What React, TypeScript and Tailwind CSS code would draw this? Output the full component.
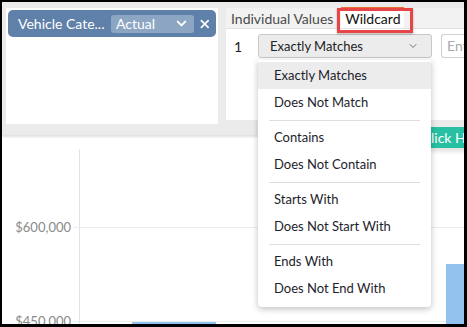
import { ChevronDown, X } from "lucide-react"

const groups = [
  ["Exactly Matches", "Does Not Match"],
  ["Contains", "Does Not Contain"],
  ["Starts With", "Does Not Start With"],
  ["Ends With", "Does Not End With"],
]

export default function App() {
  return (
    <div
      className="relative w-[467px] h-[327px] overflow-hidden border-black border-l-2 border-t-2 border-r-[3px] border-b-[3px] bg-white text-[14px]"
      style={{ fontFamily: "Lato, 'Open Sans', sans-serif" }}
    >
      {/* Filter strip */}
      <div className="flex h-[133px] gap-2 bg-[#ebebeb] px-[4px] pt-[6px] shadow-[0_2px_2px_rgba(0,0,0,0.12)]">
        {/* Left card */}
        <div className="h-[116px] w-[212px] shrink-0 bg-white p-[2px]">
          <div className="flex h-[27px] items-center rounded-[5px] bg-[#5f80a8] pl-[10px] pr-[4px] text-white">
            <span className="w-[93px] shrink-0 leading-none">Vehicle Cate...</span>
            <div className="flex h-[18px] w-[86px] items-center justify-between rounded-[3px] bg-[#8ca5c3] pl-[5px] pr-[5px]">
              <span className="leading-none">Actual</span>
              <ChevronDown className="h-[15px] w-[15px]" strokeWidth={3.2} />
            </div>
            <X className="ml-[4px] h-[14px] w-[14px]" strokeWidth={3} />
          </div>
        </div>

        {/* Right panel */}
        <div className="flex h-[112px] flex-1 flex-col bg-white">
          <div className="flex h-[21px] items-end border-b border-[#e2e2e2] bg-[#f2f2f2] pl-[5px] text-[#4a4a4a]">
            <span className="pb-[2px] leading-none">Individual Values</span>
            <div className="ml-[8px] flex h-[21px] w-[63px] shrink-0 items-center justify-center border-t-2 border-[#e8743b] bg-white text-[#111]">
              <span className="leading-none">Wildcard</span>
            </div>
          </div>
          <div className="mt-[5px] flex items-center text-[13px]">
            <span className="w-[32px] pl-[8px] text-[14px] text-[#222]">1</span>
            <div className="flex h-[24px] w-[174px] shrink-0 items-center justify-between rounded-[3px] border border-[#c8c8c8] bg-[#ececec] pl-[11px] pr-[12px] text-[#222]">
              <span className="leading-none">Exactly Matches</span>
              <ChevronDown className="h-[12px] w-[12px] text-[#777]" strokeWidth={2} />
            </div>
            <div className="ml-[9px] flex h-[24px] flex-1 items-center overflow-hidden rounded-l-[3px] border border-r-0 border-[#d0d0d0] pl-[5px] text-[14px] text-[#aaa]">
              <span className="leading-none whitespace-nowrap">Ent</span>
            </div>
          </div>
        </div>
      </div>

      {/* Annotation box round the Wildcard tab */}
      <div className="pointer-events-none absolute left-[335px] top-[6px] h-[25px] w-[76px] border-[3px] border-[#e84646] shadow-[0_1px_2px_rgba(0,0,0,0.3)]" />

      {/* Chart */}
      <div className="relative h-[189px]">
        <span className="absolute right-[393px] top-[86px] text-[13px] leading-none text-[#8a8a8a]">$600,000</span>
        <span className="absolute right-[393px] top-[180px] text-[13px] leading-none text-[#8a8a8a]">$450,000</span>
        <div className="absolute left-[77px] top-[14px] bottom-0 w-px bg-[#e2e2e2]" />
        <div className="absolute left-[71px] right-0 top-[92px] h-px bg-[#ececec]" />
        <div className="absolute left-[71px] right-0 top-[186px] h-px bg-[#ececec]" />
        <div className="absolute bottom-0 left-[130px] h-[2px] w-[84px] bg-[#91c3ee]" />
        <div className="absolute bottom-0 right-0 h-[60px] w-[18px] bg-[#91c3ee]" />
      </div>

      {/* Teal button behind menu */}
      <div className="absolute left-[428px] top-[125px] flex h-[21px] w-[40px] items-center bg-[#27c0a2] pl-[1px] text-white shadow-[0_4px_3px_rgba(0,0,0,0.1)]">
        <span className="leading-none">lick H</span>
      </div>

      {/* Dropdown menu */}
      <div className="absolute left-[256px] top-[58px] w-[173px] rounded-b-[4px] bg-white pb-[5px] pt-[2px] text-[13px] text-[#1d1d2b] shadow-[0_2px_6px_rgba(0,0,0,0.25)]">
        {groups.map((g, i) => (
          <div key={i}>
            {i > 0 && <div className="mx-[11px] mt-[4px] mb-[3px] h-px bg-[#dedede]" />}
            {g.map((item, j) => (
              <div
                key={item}
                className={`flex h-[27px] items-center pl-[16px] ${i === 0 && j === 0 ? "bg-[#ececec]" : ""}`}
              >
                <span className="leading-none">{item}</span>
              </div>
            ))}
          </div>
        ))}
      </div>
    </div>
  )
}
